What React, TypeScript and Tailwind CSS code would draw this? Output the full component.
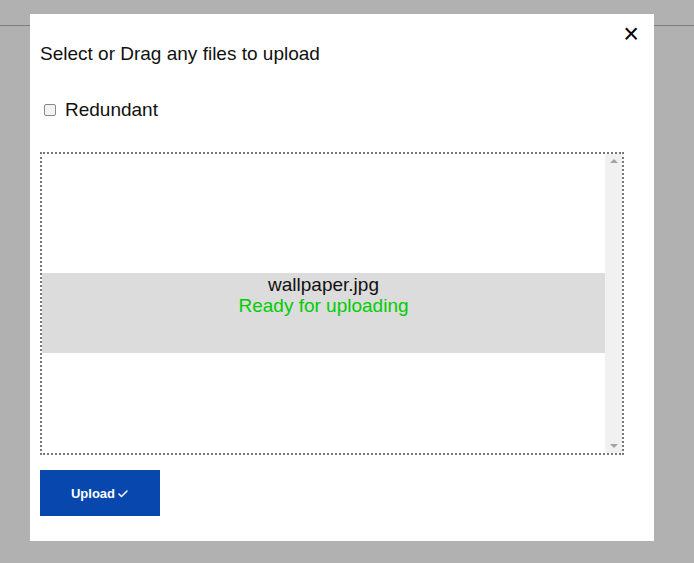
import { Check } from "lucide-react";

export default function App() {
  return (
    <div className="relative h-[563px] w-[694px] overflow-hidden bg-[#b1b1b1] font-['Liberation_Sans',Arial,sans-serif]">
      <div className="h-[26px] border-b border-[#7d7d7d]" />
      <div className="absolute left-[30px] top-[14px] flex h-[527px] w-[624px] flex-col bg-white">
        <button className="absolute right-[15px] top-[7px] text-[27px] leading-none text-black">×</button>
        <h2 className="ml-[10px] mt-[29px] text-[19px] leading-[22px] text-[#111]">Select or Drag any files to upload</h2>
        <label className="ml-[14px] mt-[34px] flex items-center gap-[9px] text-[19px] leading-[22px] text-[#111]">
          <span className="h-[12px] w-[12px] rounded-[2px] border border-[#888] bg-[#f3f3f3]" />
          Redundant
        </label>
        <div className="ml-[10px] mt-[31px] flex h-[303px] w-[584px] border-2 border-dotted border-[#777]">
          <div className="flex flex-1 flex-col pt-[119px]">
            <div className="flex h-[80px] flex-col items-center bg-[#dcdcdc] pt-[1px]">
              <div className="text-[19px] leading-[22px] text-[#111]">wallpaper.jpg</div>
              <div className="text-[19px] leading-[20px] text-[#0c0]">Ready for uploading</div>
            </div>
          </div>
          <div className="flex w-[17px] flex-col items-center justify-between bg-[#f1f1f1] py-[5px]">
            <span className="h-0 w-0 border-x-[4px] border-b-[4px] border-x-transparent border-b-[#a3a3a3]" />
            <span className="h-0 w-0 border-x-[4px] border-t-[4px] border-x-transparent border-t-[#a3a3a3]" />
          </div>
        </div>
        <button className="ml-[10px] mt-[15px] flex h-[46px] w-[120px] items-center justify-center gap-[2px] bg-[#0747ae] pt-[2px] text-[13px] font-semibold text-white">
          Upload
          <Check size={12} strokeWidth={3} />
        </button>
      </div>
    </div>
  );
}
